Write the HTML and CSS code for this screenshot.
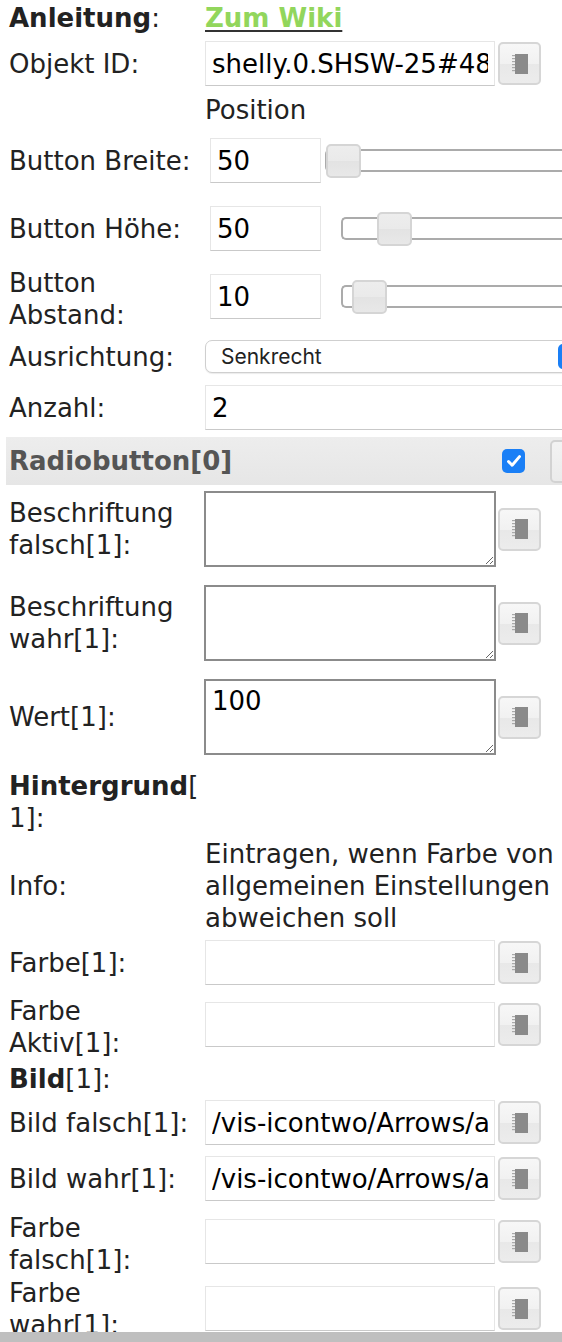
FILE: index.html
```html
<!DOCTYPE html>
<html lang="de">
<head>
<meta charset="utf-8">
<title>Radiobutton</title>
<link rel="stylesheet" href="styles.css">
</head>
<body>
<div class="panel">
  <div class="row m2">
    <div class="lbl"><b>Anleitung</b>:</div>
    <div class="fld"><a class="wiki" href="#">Zum Wiki</a></div>
  </div>
  <div class="row m7">
    <div class="lbl">Objekt ID:</div>
    <input class="txt" value="shelly.0.SHSW-25#483FDA82C4A2#1.Relay0.Position">
    <button class="pick"><svg class="ico" viewBox="0 0 16 20"><rect x="3" y="0" width="13" height="20" fill="#8a8a8a"/><g fill="#a9a9a9"><rect x="0" y="1" width="3" height="1.2"/><rect x="0" y="4" width="3" height="1.2"/><rect x="0" y="7" width="3" height="1.2"/><rect x="0" y="10" width="3" height="1.2"/><rect x="0" y="13" width="3" height="1.2"/><rect x="0" y="16" width="3" height="1.2"/></g></svg></button>
  </div>
  <div class="row m8">
    <div class="lbl"></div>
    <div class="fld">Position</div>
  </div>
  <div class="row m12">
    <div class="lbl">Button Breite:</div>
    <div class="slrow">
      <input class="num" value="50">
      <div class="slider sl-b"><div class="track"></div><div class="handle h-b"></div></div>
    </div>
  </div>
  <div class="row m23">
    <div class="lbl">Button Höhe:</div>
    <div class="slrow">
      <input class="num" value="50">
      <div class="slider"><div class="track"></div><div class="handle h-h"></div></div>
    </div>
  </div>
  <div class="row top m16">
    <div class="lbl">Button<br>Abstand:</div>
    <div class="slrow">
      <input class="num" value="10">
      <div class="slider"><div class="track"></div><div class="handle h-a"></div></div>
    </div>
  </div>
  <div class="row m9">
    <div class="lbl">Ausrichtung:</div>
    <div class="select"><span>Senkrecht</span><i class="sel-arrow"></i></div>
  </div>
  <div class="row m12">
    <div class="lbl">Anzahl:</div>
    <input class="txt wide" value="2">
  </div>
  <div class="group m7">
    <div class="group-title">Radiobutton[0]</div>
    <span class="check"><svg viewBox="0 0 24 24" width="24" height="24"><path d="M6 12.5l4 4.2 8-9.5" fill="none" stroke="#fff" stroke-width="3.2" stroke-linecap="round" stroke-linejoin="round"/></svg></span>
    <span class="gbtn"></span>
  </div>
  <div class="row m6">
    <div class="lbl">Beschriftung<br>falsch[1]:</div>
    <textarea class="area"></textarea>
    <button class="pick"><svg class="ico" viewBox="0 0 16 20"><rect x="3" y="0" width="13" height="20" fill="#8a8a8a"/><g fill="#a9a9a9"><rect x="0" y="1" width="3" height="1.2"/><rect x="0" y="4" width="3" height="1.2"/><rect x="0" y="7" width="3" height="1.2"/><rect x="0" y="10" width="3" height="1.2"/><rect x="0" y="13" width="3" height="1.2"/><rect x="0" y="16" width="3" height="1.2"/></g></svg></button>
  </div>
  <div class="row m18">
    <div class="lbl">Beschriftung<br>wahr[1]:</div>
    <textarea class="area"></textarea>
    <button class="pick"><svg class="ico" viewBox="0 0 16 20"><rect x="3" y="0" width="13" height="20" fill="#8a8a8a"/><g fill="#a9a9a9"><rect x="0" y="1" width="3" height="1.2"/><rect x="0" y="4" width="3" height="1.2"/><rect x="0" y="7" width="3" height="1.2"/><rect x="0" y="10" width="3" height="1.2"/><rect x="0" y="13" width="3" height="1.2"/><rect x="0" y="16" width="3" height="1.2"/></g></svg></button>
  </div>
  <div class="row m18">
    <div class="lbl">Wert[1]:</div>
    <textarea class="area">100</textarea>
    <button class="pick"><svg class="ico" viewBox="0 0 16 20"><rect x="3" y="0" width="13" height="20" fill="#8a8a8a"/><g fill="#a9a9a9"><rect x="0" y="1" width="3" height="1.2"/><rect x="0" y="4" width="3" height="1.2"/><rect x="0" y="7" width="3" height="1.2"/><rect x="0" y="10" width="3" height="1.2"/><rect x="0" y="13" width="3" height="1.2"/><rect x="0" y="16" width="3" height="1.2"/></g></svg></button>
  </div>
  <div class="row m15">
    <div class="lbl"><b>Hintergrund</b>[<br>1]:</div>
  </div>
  <div class="row m4">
    <div class="lbl">Info:</div>
    <div class="info">Eintragen, wenn Farbe von<br>allgemeinen Einstellungen<br>abweichen soll</div>
  </div>
  <div class="row m6">
    <div class="lbl">Farbe[1]:</div>
    <input class="txt" value="">
    <button class="pick"><svg class="ico" viewBox="0 0 16 20"><rect x="3" y="0" width="13" height="20" fill="#8a8a8a"/><g fill="#a9a9a9"><rect x="0" y="1" width="3" height="1.2"/><rect x="0" y="4" width="3" height="1.2"/><rect x="0" y="7" width="3" height="1.2"/><rect x="0" y="10" width="3" height="1.2"/><rect x="0" y="13" width="3" height="1.2"/><rect x="0" y="16" width="3" height="1.2"/></g></svg></button>
  </div>
  <div class="row top m10">
    <div class="lbl">Farbe<br>Aktiv[1]:</div>
    <input class="txt" value="">
    <button class="pick"><svg class="ico" viewBox="0 0 16 20"><rect x="3" y="0" width="13" height="20" fill="#8a8a8a"/><g fill="#a9a9a9"><rect x="0" y="1" width="3" height="1.2"/><rect x="0" y="4" width="3" height="1.2"/><rect x="0" y="7" width="3" height="1.2"/><rect x="0" y="10" width="3" height="1.2"/><rect x="0" y="13" width="3" height="1.2"/><rect x="0" y="16" width="3" height="1.2"/></g></svg></button>
  </div>
  <div class="row m4">
    <div class="lbl"><b>Bild</b>[1]:</div>
  </div>
  <div class="row m5">
    <div class="lbl">Bild falsch[1]:</div>
    <input class="txt" value="/vis-icontwo/Arrows/arrow_down.png">
    <button class="pick"><svg class="ico" viewBox="0 0 16 20"><rect x="3" y="0" width="13" height="20" fill="#8a8a8a"/><g fill="#a9a9a9"><rect x="0" y="1" width="3" height="1.2"/><rect x="0" y="4" width="3" height="1.2"/><rect x="0" y="7" width="3" height="1.2"/><rect x="0" y="10" width="3" height="1.2"/><rect x="0" y="13" width="3" height="1.2"/><rect x="0" y="16" width="3" height="1.2"/></g></svg></button>
  </div>
  <div class="row m11">
    <div class="lbl">Bild wahr[1]:</div>
    <input class="txt" value="/vis-icontwo/Arrows/arrow_up.png">
    <button class="pick"><svg class="ico" viewBox="0 0 16 20"><rect x="3" y="0" width="13" height="20" fill="#8a8a8a"/><g fill="#a9a9a9"><rect x="0" y="1" width="3" height="1.2"/><rect x="0" y="4" width="3" height="1.2"/><rect x="0" y="7" width="3" height="1.2"/><rect x="0" y="10" width="3" height="1.2"/><rect x="0" y="13" width="3" height="1.2"/><rect x="0" y="16" width="3" height="1.2"/></g></svg></button>
  </div>
  <div class="row top m11">
    <div class="lbl">Farbe<br>falsch[1]:</div>
    <input class="txt" value="">
    <button class="pick"><svg class="ico" viewBox="0 0 16 20"><rect x="3" y="0" width="13" height="20" fill="#8a8a8a"/><g fill="#a9a9a9"><rect x="0" y="1" width="3" height="1.2"/><rect x="0" y="4" width="3" height="1.2"/><rect x="0" y="7" width="3" height="1.2"/><rect x="0" y="10" width="3" height="1.2"/><rect x="0" y="13" width="3" height="1.2"/><rect x="0" y="16" width="3" height="1.2"/></g></svg></button>
  </div>
  <div class="row top m1 late">
    <div class="lbl">Farbe<br>wahr[1]:</div>
    <input class="txt" value="">
    <button class="pick"><svg class="ico" viewBox="0 0 16 20"><rect x="3" y="0" width="13" height="20" fill="#8a8a8a"/><g fill="#a9a9a9"><rect x="0" y="1" width="3" height="1.2"/><rect x="0" y="4" width="3" height="1.2"/><rect x="0" y="7" width="3" height="1.2"/><rect x="0" y="10" width="3" height="1.2"/><rect x="0" y="13" width="3" height="1.2"/><rect x="0" y="16" width="3" height="1.2"/></g></svg></button>
  </div>
</div>
<div class="bottom-bar"></div>
</body>
</html>
```
FILE: styles.css
```css
* { box-sizing: border-box; }
html, body {
  margin: 0;
  padding: 0;
  background: #fff;
  overflow: hidden;
  height: 1342px;
}
body {
  font-family: "DejaVu Sans", Verdana, sans-serif;
  font-size: 26px;
  line-height: 32px;
  color: #222;
}
.panel {
  width: 562px;
  padding-left: 9px;
  overflow: hidden;
}
.row {
  display: grid;
  grid-template-columns: 196px 290px 46px;
  align-items: center;
}
.row.top { align-items: start; }
.row.top .txt, .row.top .slrow { margin-top: 7px; }
.row.top .pick { margin-top: 8px; }
.row.top.late .txt { margin-top: 9px; }
.row.top.late .pick { margin-top: 10px; }

.m1 { margin-top: 1px; }
.m2 { margin-top: 2px; }
.m4 { margin-top: 4px; }
.m5 { margin-top: 5px; }
.m6 { margin-top: 6px; }
.m7 { margin-top: 7px; }
.m8 { margin-top: 8px; }
.m9 { margin-top: 9px; }
.m10 { margin-top: 10px; }
.m11 { margin-top: 11px; }
.m12 { margin-top: 12px; }
.m15 { margin-top: 15px; }
.m16 { margin-top: 16px; }
.m18 { margin-top: 18px; }
.m23 { margin-top: 23px; }

.lbl { white-space: nowrap; }
.lbl b { font-weight: bold; }
.fld { white-space: nowrap; }

.wiki {
  color: #92d65c;
  font-weight: bold;
  text-decoration: underline;
  text-decoration-color: #333;
  text-decoration-thickness: 2px;
  text-underline-offset: 3px;
}

.txt, .num {
  font-family: "DejaVu Sans", Verdana, sans-serif;
  font-size: 26px;
  color: #000;
  height: 45px;
  padding: 0 6px;
  border: 1px solid #e6e6e6;
  border-bottom-color: #c9c9c9;
  background: #fff;
  outline: none;
  margin: 0;
  width: 290px;
}
.txt.wide {
  grid-column: 2 / -1;
  width: 420px;
}

.pick {
  width: 43px;
  height: 43px;
  margin: 0 0 0 3px;
  padding: 0;
  border: 2px solid #d6d6d6;
  border-radius: 5px;
  background: linear-gradient(#f7f7f7 0%, #f1f1f1 50%, #e8e8e8 51%, #ececec 100%);
  display: flex;
  align-items: center;
  justify-content: center;
}
.ico { width: 16px; height: 20px; display: block; }

.slrow {
  grid-column: 2 / -1;
  display: flex;
  align-items: center;
  padding-left: 5px;
  width: 420px;
}
.num { width: 111px; flex: none; }
.slider {
  position: relative;
  flex: none;
  width: 260px;
  height: 34px;
  margin-left: 20px;
  display: flex;
  align-items: center;
}
.slider.sl-b { margin-left: 4px; }
.track {
  width: 100%;
  height: 23px;
  border: 2px solid #ababab;
  border-right: none;
  border-radius: 5px 0 0 5px;
  background: #fff;
}
.handle {
  position: absolute;
  top: 0;
  width: 35px;
  height: 34px;
  border: 2px solid #d5d5d5;
  border-radius: 5px;
  background: linear-gradient(#ededed 0%, #eaeaea 50%, #e3e3e3 51%, #e8e8e8 100%);
}
.h-b { left: 1px; }
.h-h { left: 36px; }
.h-a { left: 11px; }

.select {
  grid-column: 2 / -1;
  width: 380px;
  height: 33px;
  border: 1px solid #cfcfcf;
  border-radius: 7px;
  background: #fff;
  display: flex;
  align-items: center;
  padding-left: 15px;
  font-family: Inter, "Liberation Sans", sans-serif;
  font-size: 21px;
  color: #222;
  box-shadow: 0 1px 1px rgba(0,0,0,0.08);
}
.select span { flex: 1; }
.sel-arrow {
  flex: none;
  width: 22px;
  height: 25px;
  border-radius: 5px;
  background: #1a7ff6;
  margin-right: 4px;
}

.group {
  margin-left: -3px;
  height: 48px;
  width: 600px;
  background: linear-gradient(#ededed, #e6e6e6);
  display: flex;
  align-items: center;
  padding-left: 3px;
}
.group-title {
  font-weight: bold;
  color: #555;
  flex: none;
  width: 493px;
}
.check {
  width: 23px;
  height: 24px;
  border-radius: 5px;
  background: #1a7ff6;
  display: flex;
  align-items: center;
  justify-content: center;
  flex: none;
}
.check svg { width: 22px; height: 22px; }
.gbtn {
  flex: none;
  width: 43px;
  height: 43px;
  margin-left: 25px;
  border: 2px solid #d2d2d2;
  border-radius: 5px;
  background: linear-gradient(#f3f3f3, #ebebeb);
}

.area {
  width: 292px;
  height: 76px;
  margin: 0 0 0 -1px;
  border: 2px solid #8b8b8b;
  border-radius: 0;
  padding: 4px 6px;
  font-family: "DejaVu Sans", Verdana, sans-serif;
  font-size: 26px;
  line-height: 32px;
  color: #000;
  background: #fff;
  resize: both;
  outline: none;
}

.info {
  grid-column: 2 / -1;
  white-space: nowrap;
}

.bottom-bar {
  position: fixed;
  left: 0;
  right: 0;
  bottom: 0;
  height: 10px;
  background: #bfbfbf;
}
```
